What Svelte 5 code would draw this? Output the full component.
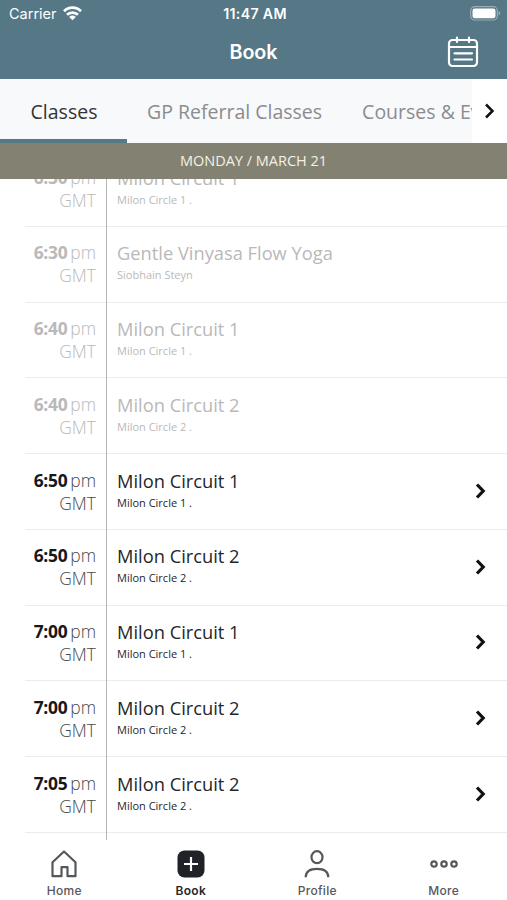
<script lang="ts">
	type Session = {
		time: string;
		title: string;
		host: string;
		past?: boolean;
	};

	const tabs: string[] = ['Classes', 'GP Referral Classes', 'Courses & Events'];
	const navItems: string[] = ['Home', 'Book', 'Profile', 'More'];

	const sessions: Session[] = [
		{ time: '6:30', title: 'Milon Circuit 1', host: 'Milon Circle 1 .', past: true },
		{ time: '6:30', title: 'Gentle Vinyasa Flow Yoga', host: 'Siobhain Steyn', past: true },
		{ time: '6:40', title: 'Milon Circuit 1', host: 'Milon Circle 1 .', past: true },
		{ time: '6:40', title: 'Milon Circuit 2', host: 'Milon Circle 2 .', past: true },
		{ time: '6:50', title: 'Milon Circuit 1', host: 'Milon Circle 1 .' },
		{ time: '6:50', title: 'Milon Circuit 2', host: 'Milon Circle 2 .' },
		{ time: '7:00', title: 'Milon Circuit 1', host: 'Milon Circle 1 .' },
		{ time: '7:00', title: 'Milon Circuit 2', host: 'Milon Circle 2 .' },
		{ time: '7:05', title: 'Milon Circuit 2', host: 'Milon Circle 2 .' }
	];

	let activeTab: string = $state('Classes');
	let activeNav: string = $state('Book');
</script>

<div class="app">
	<header>
		<div class="status">
			<div class="carrier">
				<span>Carrier</span>
				<svg width="19" height="15" viewBox="0 0 19 15" fill="none" stroke="#fff" stroke-width="2.7">
					<path d="M1 5.2a12 12 0 0 1 17 0" />
					<path d="M4 8.8a7.8 7.8 0 0 1 11 0" />
					<path d="M9.5 14.3 6.2 11a4.6 4.6 0 0 1 6.6 0z" fill="#fff" stroke="none" />
				</svg>
			</div>
			<span class="clock">11:47 AM</span>
			<svg class="battery" width="31" height="15" viewBox="0 0 31 15">
				<rect x="0.7" y="0.7" width="26.6" height="13.3" rx="4" fill="none" stroke="#fff" stroke-opacity="0.4" stroke-width="1.2" />
				<rect x="2.5" y="2.5" width="23" height="9.7" rx="2.3" fill="#fff" />
				<path d="M28.6 5v4.6q1.6-.6 1.6-2.3T28.6 5z" fill="#fff" fill-opacity="0.4" />
			</svg>
		</div>
		<div class="title-bar">
			<span></span>
			<h1>Book</h1>
			<button class="calendar" aria-label="Calendar">
				<svg width="32" height="32" viewBox="0 0 32 32" fill="none" stroke="#fff" stroke-width="2.2" stroke-linecap="round">
					<rect x="2" y="4" width="28" height="26" rx="3.5" />
					<path d="M2.5 11h27M10 1.5V6M22 1.5V6M7.5 17.3h17.5M7.5 23.5h17.5" />
				</svg>
			</button>
		</div>
	</header>

	<div class="tabs">
		<div class="tab-strip">
			{#each tabs as tab}
				<button class="tab" class:active={activeTab === tab} onclick={() => (activeTab = tab)}>{tab}</button>
			{/each}
		</div>
		<button class="tab-next" aria-label="Next tabs">
			<svg width="12" height="18" viewBox="0 0 12 18" fill="none" stroke="#111" stroke-width="2.5">
				<path d="m2 2.5 6.5 6.5L2 15.5" />
			</svg>
		</button>
	</div>

	<div class="date">MONDAY / MARCH 21</div>

	<main>
		<div class="sessions">
			{#each sessions as session}
				<div class="session" class:past={session.past}>
					<div class="when">
						<div><b>{session.time}</b><span class="meridiem">pm</span></div>
						<div class="zone">GMT</div>
					</div>
					<div class="what">
						<div class="name">{session.title}</div>
						<div class="host">{session.host}</div>
					</div>
					{#if !session.past}
						<svg class="chevron" width="12" height="16" viewBox="0 0 12 16" fill="none" stroke="#111" stroke-width="3.2">
							<path d="m2 1.5 6.2 6.5L2 14.5" />
						</svg>
					{/if}
				</div>
			{/each}
			<div class="session next"><div class="when"></div></div>
		</div>
	</main>

	<nav>
		{#each navItems as item}
			<button class="nav-item" class:active={activeNav === item} onclick={() => (activeNav = item)}>
				<svg width="28" height="28" viewBox="0 0 28 28" fill="none" stroke="#55585b" stroke-width="2.2">
					{#if item === 'Home'}
						<path d="M2.5 12.3 14 1.5l11.5 10.8v13.9h-8v-9h-6v9h-9z" stroke-linejoin="round" />
					{:else if item === 'Book'}
						<rect x="0.5" y="0.5" width="27" height="27" rx="7" fill="#1f2226" stroke="none" />
						<path d="M14 7v14M7 14h14" stroke="#fff" />
					{:else if item === 'Profile'}
						<ellipse cx="14" cy="7.2" rx="5.5" ry="6" />
						<path d="M2.7 27.3c0-5.5 3.8-8.5 11.3-8.5s11.3 3 11.3 8.5" />
					{:else}
						<circle cx="4" cy="14" r="2.7" />
						<circle cx="14" cy="14" r="2.7" />
						<circle cx="24" cy="14" r="2.7" />
					{/if}
				</svg>
				<span>{item}</span>
			</button>
		{/each}
	</nav>
</div>

<style>
	:global(body) {
		margin: 0;
		background: #fff;
	}

	.app {
		display: flex;
		flex-direction: column;
		width: 507px;
		height: 900px;
		overflow: hidden;
		background: #fff;
		font-family: 'Open Sans', sans-serif;
		color: #252629;
	}

	button {
		padding: 0;
		border: 0;
		background: none;
		font: inherit;
		color: inherit;
	}

	svg {
		display: block;
		flex-shrink: 0;
	}

	header {
		flex: 0 0 79px;
		background: #557786;
		color: #fff;
		font-family: Inter, sans-serif;
	}

	.status {
		display: grid;
		grid-template-columns: 1fr auto 1fr;
		align-items: center;
		height: 27px;
		padding: 0 6px 0 9px;
		font-size: 14.5px;
	}

	.carrier {
		display: flex;
		align-items: center;
		gap: 6px;
	}

	.clock {
		font-size: 14.2px;
		font-weight: 600;
		letter-spacing: 0.3px;
	}

	.battery {
		justify-self: end;
	}

	.title-bar {
		display: grid;
		grid-template-columns: 1fr auto 1fr;
		align-items: center;
		height: 50px;
		padding: 0 28px;
	}

	h1 {
		margin: 0;
		font-size: 19.7px;
		font-weight: 600;
		line-height: 28px;
	}

	.calendar {
		justify-self: end;
	}

	.tabs {
		display: flex;
		flex: 0 0 64px;
		background: #f8f9fb;
	}

	.tab-strip {
		display: flex;
		flex: 1;
		min-width: 0;
		overflow: hidden;
	}

	.tab {
		box-sizing: border-box;
		flex-shrink: 0;
		padding: 4px 20px 0;
		border-bottom: 4px solid transparent;
		font-size: 19.5px;
		color: #8b8c90;
		white-space: nowrap;
	}

	.tab:first-child {
		width: 127px;
		padding-left: 21px;
	}

	.tab.active {
		border-color: #557786;
		color: #323337;
	}

	.tab-next {
		display: flex;
		align-items: center;
		justify-content: center;
		width: 35px;
		background: #fff;
	}

	.date {
		flex: 0 0 36px;
		background: #838171;
		color: #f3f1e5;
		font-size: 14.5px;
		line-height: 36px;
		text-align: center;
	}

	main {
		flex: 1;
		min-height: 0;
		overflow: hidden;
	}

	.sessions {
		margin-top: -28px;
	}

	.session {
		display: flex;
		box-sizing: border-box;
		height: 75.75px;
		margin-left: 25px;
		border-bottom: 1px solid #ebebeb;
	}

	.session.next {
		border: 0;
	}

	.when {
		box-sizing: border-box;
		width: 82px;
		padding: 14.5px 10px 0 0;
		border-right: 1px solid #b5b5b5;
		margin-bottom: -1px;
		font-size: 17.4px;
		line-height: 23px;
		text-align: right;
		color: #46484b;
	}

	.when b {
		color: #17181a;
		letter-spacing: -0.3px;
	}

	.meridiem {
		margin-left: 3px;
	}

	.meridiem,
	.zone {
		font-weight: 300;
	}

	.what {
		flex: 1;
		padding: 14.5px 0 0 10px;
	}

	.name {
		font-size: 18.3px;
		line-height: 24px;
	}

	.host {
		font-size: 11px;
		line-height: 20px;
	}

	.past .when,
	.past b,
	.past .what {
		color: #b9b9b9;
	}

	.chevron {
		align-self: center;
		margin: 0 20px 1px 0;
	}

	nav {
		display: flex;
		flex: 0 0 60px;
		padding-left: 1px;
		background: #fff;
	}

	.nav-item {
		display: flex;
		flex: 1;
		flex-direction: column;
		align-items: center;
		padding-top: 10px;
		font-family: Inter, sans-serif;
		font-size: 12px;
		font-weight: 500;
		line-height: 16px;
		letter-spacing: 0.3px;
		color: #56585b;
	}

	.nav-item span {
		margin-top: 5px;
	}

	.nav-item.active {
		font-weight: 600;
		color: #26282b;
	}
</style>
